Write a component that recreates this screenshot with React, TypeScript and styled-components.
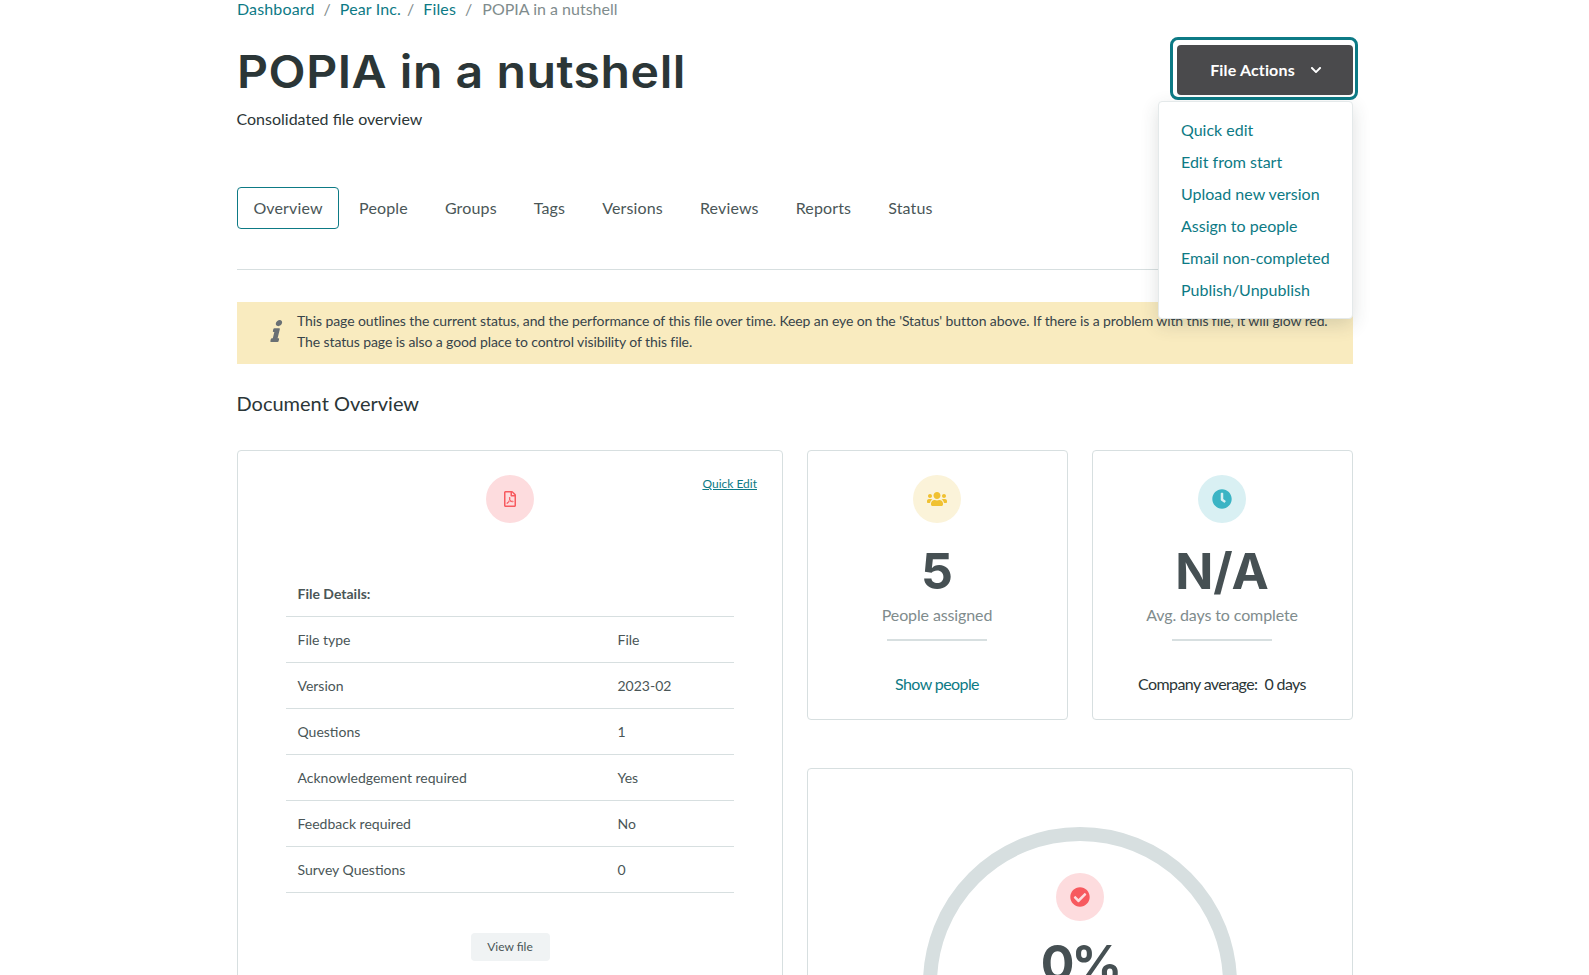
import React from 'react';
import styled, { createGlobalStyle } from 'styled-components';
import { FaCheckCircle, FaChevronDown, FaClock, FaInfo, FaRegFilePdf, FaUsers } from 'react-icons/fa';

const teal = '#0d7a85';
const ink = '#2b3637';
const grey = '#7f8c8d';
const line = '#d7dfe0';

const GlobalStyle = createGlobalStyle`
  html, body {
    margin: 0;
    height: 975px;
    overflow: hidden;
    background: #fff;
    font-family: Lato, "Liberation Sans", sans-serif;
    font-size: 16px;
    line-height: 24px;
    color: ${ink};
  }
  * { box-sizing: border-box; }
`;

const Page = styled.div`
  width: 1116px;
  margin: -3px 0 0 237px;
`;

const Crumbs = styled.nav`
  display: flex;
  height: 24px;
`;

const Crumb = styled.a`
  color: ${teal};
  letter-spacing: 0.15px;
`;

const Slash = styled.span<{ $before?: number; $after?: number }>`
  color: ${grey};
  margin: 0 ${(p) => p.$after ?? 9}px 0 ${(p) => p.$before ?? 9}px;
`;

const CrumbCurrent = styled.span`
  color: ${grey};
`;

const Header = styled.header`
  display: flex;
  justify-content: space-between;
  align-items: flex-start;
`;

const Title = styled.h1`
  margin: 24px 0 0;
  font-family: Inter, "Liberation Sans", sans-serif;
  font-weight: 600;
  font-size: 45px;
  line-height: 54px;
  letter-spacing: 0.5px;
  color: ${ink};
  transform: scaleX(1.07);
  transform-origin: left center;
`;

const Subtitle = styled.p`
  margin: 8px 0 0 -0.5px;
`;

const Actions = styled.div`
  position: relative;
  margin-top: 24px;
`;

const ActionButton = styled.button`
  position: relative;
  display: flex;
  align-items: center;
  justify-content: center;
  gap: 15px;
  width: 176px;
  height: 50px;
  padding: 0 0 0 2px;
  border: 0;
  border-radius: 4px;
  background: #4a4a4c;
  color: #fff;
  font: 700 16px/24px Lato, sans-serif;
  letter-spacing: 0.15px;

  &::after {
    content: '';
    position: absolute;
    top: -8px;
    left: -7px;
    right: -5px;
    bottom: -5px;
    border: 3px solid ${teal};
    border-radius: 8px;
  }
`;

const Menu = styled.ul`
  position: absolute;
  top: 56px;
  right: 0;
  width: 195px;
  margin: 0;
  padding: 12px 22px;
  list-style: none;
  background: #fff;
  border: 1px solid #e4e9ea;
  border-radius: 4px;
  box-shadow: 0 6px 18px rgba(44, 54, 55, 0.16);
  z-index: 2;
`;

const MenuItem = styled.li`
  padding: 4px 0;
  color: ${teal};
  white-space: nowrap;
`;

const Tabs = styled.nav`
  display: flex;
  gap: 3px;
  margin-top: 56px;
`;

const Tab = styled.a<{ $active?: boolean }>`
  height: 42px;
  padding: 8px ${(p) => (p.$active ? '15.4px' : '16px')};
  border: 1px solid ${(p) => (p.$active ? teal : 'transparent')};
  border-radius: 4px;
  color: #4a5657;
  letter-spacing: 0.15px;
`;

const Rule = styled.hr`
  height: 1px;
  margin: 40px 0 32px;
  border: 0;
  background: ${line};
`;

const Alert = styled.div`
  display: flex;
  align-items: center;
  height: 62px;
  padding: 0 0 4px 32px;
  background: #f9ebbf;
  font-size: 14px;
  line-height: 21px;
  letter-spacing: -0.1px;
  color: #37444a;
  white-space: nowrap;
`;

const AlertIcon = styled(FaInfo)`
  flex: none;
  width: 16px;
  height: 22px;
  margin-right: 12px;
  color: #6a7074;
  transform: skewX(-14deg);
`;

const SectionTitle = styled.h2`
  margin: 27px 0 35px -0.5px;
  font-size: 20px;
  line-height: 24px;
  font-weight: 400;
  color: ${ink};
`;

const Board = styled.div`
  display: grid;
  grid-template-columns: 546px 1fr;
  gap: 24px;
  align-items: start;
`;

const Side = styled.div`
  display: grid;
  grid-template-columns: 1fr 1fr;
  column-gap: 24px;
  row-gap: 48px;
`;

const Card = styled.section`
  border: 1px solid ${line};
  border-radius: 4px;
  background: #fff;
`;

const FileCard = styled(Card)`
  position: relative;
  height: 620px;
  padding: 24px 48px;
  display: flex;
  flex-direction: column;
  align-items: center;
`;

const QuickEdit = styled.a`
  position: absolute;
  top: 24px;
  right: 25px;
  font-size: 12px;
  line-height: 18px;
  color: ${teal};
  text-decoration: underline;
`;

const IconDisc = styled.div<{ $bg: string; $fg: string }>`
  flex: none;
  display: flex;
  align-items: center;
  justify-content: center;
  width: 48px;
  height: 48px;
  border-radius: 50%;
  background: ${(p) => p.$bg};
  color: ${(p) => p.$fg};
`;

const Details = styled.table`
  width: 448px;
  margin-top: 48px;
  border-collapse: collapse;
  font-size: 14px;
  line-height: 21px;
  color: #4a5657;
  text-align: left;

  th, td {
    height: 46px;
    padding: 12px 11.5px;
    border-bottom: 1px solid ${line};
  }
  th { height: 45px; padding-bottom: 11px; font-weight: 700; }
  td:first-child { width: 320px; }
`;

const GhostButton = styled.button`
  width: 79px;
  height: 28px;
  margin-top: 40px;
  padding: 0;
  border: 0;
  border-radius: 4px;
  background: #f0f3f4;
  color: #4a5657;
  font: 400 12px/18px Lato, sans-serif;
`;

const StatCard = styled(Card)`
  display: flex;
  flex-direction: column;
  align-items: center;
  height: 270px;
  padding: 24px 1px 0 0;
`;

const Figure = styled.div`
  margin-top: 18px;
  font-family: Inter, "Liberation Sans", sans-serif;
  font-weight: 700;
  font-size: 50px;
  line-height: 60px;
  color: #465053;
`;

const StatLabel = styled.div`
  margin-top: 2px;
  color: ${grey};
  letter-spacing: -0.12px;
`;

const Divider = styled.div`
  width: 100px;
  height: 2px;
  margin-top: 12px;
  background: ${line};
`;

const StatFoot = styled.div`
  margin-top: 31px;
  color: ${ink};
  letter-spacing: -0.6px;
  white-space: pre;
`;

const StatLink = styled.a`
  margin-top: 31px;
  color: ${teal};
  letter-spacing: -0.6px;
`;

const ProgressCard = styled(Card)`
  grid-column: 1 / -1;
  height: 400px;
  padding-top: 58px;
  display: flex;
  justify-content: center;
`;

const Ring = styled.div`
  width: 314px;
  height: 314px;
  padding-top: 32px;
  border: 14px solid ${line};
  border-radius: 50%;
  display: flex;
  flex-direction: column;
  align-items: center;
`;

const RingFigure = styled(Figure)`
  margin-top: 12px;
  letter-spacing: -3px;
`;

const rows = [
  ['File type', 'File'],
  ['Version', '2023-02'],
  ['Questions', '1'],
  ['Acknowledgement required', 'Yes'],
  ['Feedback required', 'No'],
  ['Survey Questions', '0'],
];

const menuItems = ['Quick edit', 'Edit from start', 'Upload new version', 'Assign to people', 'Email non-completed', 'Publish/Unpublish'];
const tabs = ['Overview', 'People', 'Groups', 'Tags', 'Versions', 'Reviews', 'Reports', 'Status'];

export default function App() {
  return (
    <Page>
      <GlobalStyle />
      <Crumbs>
        <Crumb>Dashboard</Crumb>
        <Slash>/</Slash>
        <Crumb>Pear Inc.</Crumb>
        <Slash $before={6}>/</Slash>
        <Crumb>Files</Crumb>
        <Slash $after={10}>/</Slash>
        <CrumbCurrent>POPIA in a nutshell</CrumbCurrent>
      </Crumbs>

      <Header>
        <div>
          <Title>POPIA in a nutshell</Title>
          <Subtitle>Consolidated file overview</Subtitle>
        </div>
        <Actions>
          <ActionButton>
            File Actions
            <FaChevronDown size={12} />
          </ActionButton>
          <Menu>
            {menuItems.map((item) => (
              <MenuItem key={item}>{item}</MenuItem>
            ))}
          </Menu>
        </Actions>
      </Header>

      <Tabs>
        {tabs.map((tab, i) => (
          <Tab key={tab} $active={i === 0}>{tab}</Tab>
        ))}
      </Tabs>
      <Rule />

      <Alert>
        <AlertIcon />
        <div>
          This page outlines the current status, and the performance of this file over time. Keep an eye on the 'Status' button above. If there is a problem with this file, it will glow red.
          <br />
          The status page is also a good place to control visibility of this file.
        </div>
      </Alert>

      <SectionTitle>Document Overview</SectionTitle>

      <Board>
        <FileCard>
          <QuickEdit>Quick Edit</QuickEdit>
          <IconDisc $bg="#fddcde" $fg="#f75a5f">
            <FaRegFilePdf size={16} />
          </IconDisc>
          <Details>
            <thead>
              <tr>
                <th colSpan={2}>File Details:</th>
              </tr>
            </thead>
            <tbody>
              {rows.map(([label, value]) => (
                <tr key={label}>
                  <td>{label}</td>
                  <td>{value}</td>
                </tr>
              ))}
            </tbody>
          </Details>
          <GhostButton>View file</GhostButton>
        </FileCard>

        <Side>
          <StatCard>
            <IconDisc $bg="#fbf3d9" $fg="#f0c132">
              <FaUsers size={20} />
            </IconDisc>
            <Figure>5</Figure>
            <StatLabel>People assigned</StatLabel>
            <Divider />
            <StatLink>Show people</StatLink>
          </StatCard>
          <StatCard>
            <IconDisc $bg="#d9f0f3" $fg="#3bb4c4">
              <FaClock size={20} />
            </IconDisc>
            <Figure>N/A</Figure>
            <StatLabel>Avg. days to complete</StatLabel>
            <Divider />
            <StatFoot>Company average:  0 days</StatFoot>
          </StatCard>
          <ProgressCard>
            <Ring>
              <IconDisc $bg="#fddcde" $fg="#f75a5f">
                <FaCheckCircle size={20} />
              </IconDisc>
              <RingFigure>0%</RingFigure>
            </Ring>
          </ProgressCard>
        </Side>
      </Board>
    </Page>
  );
}
